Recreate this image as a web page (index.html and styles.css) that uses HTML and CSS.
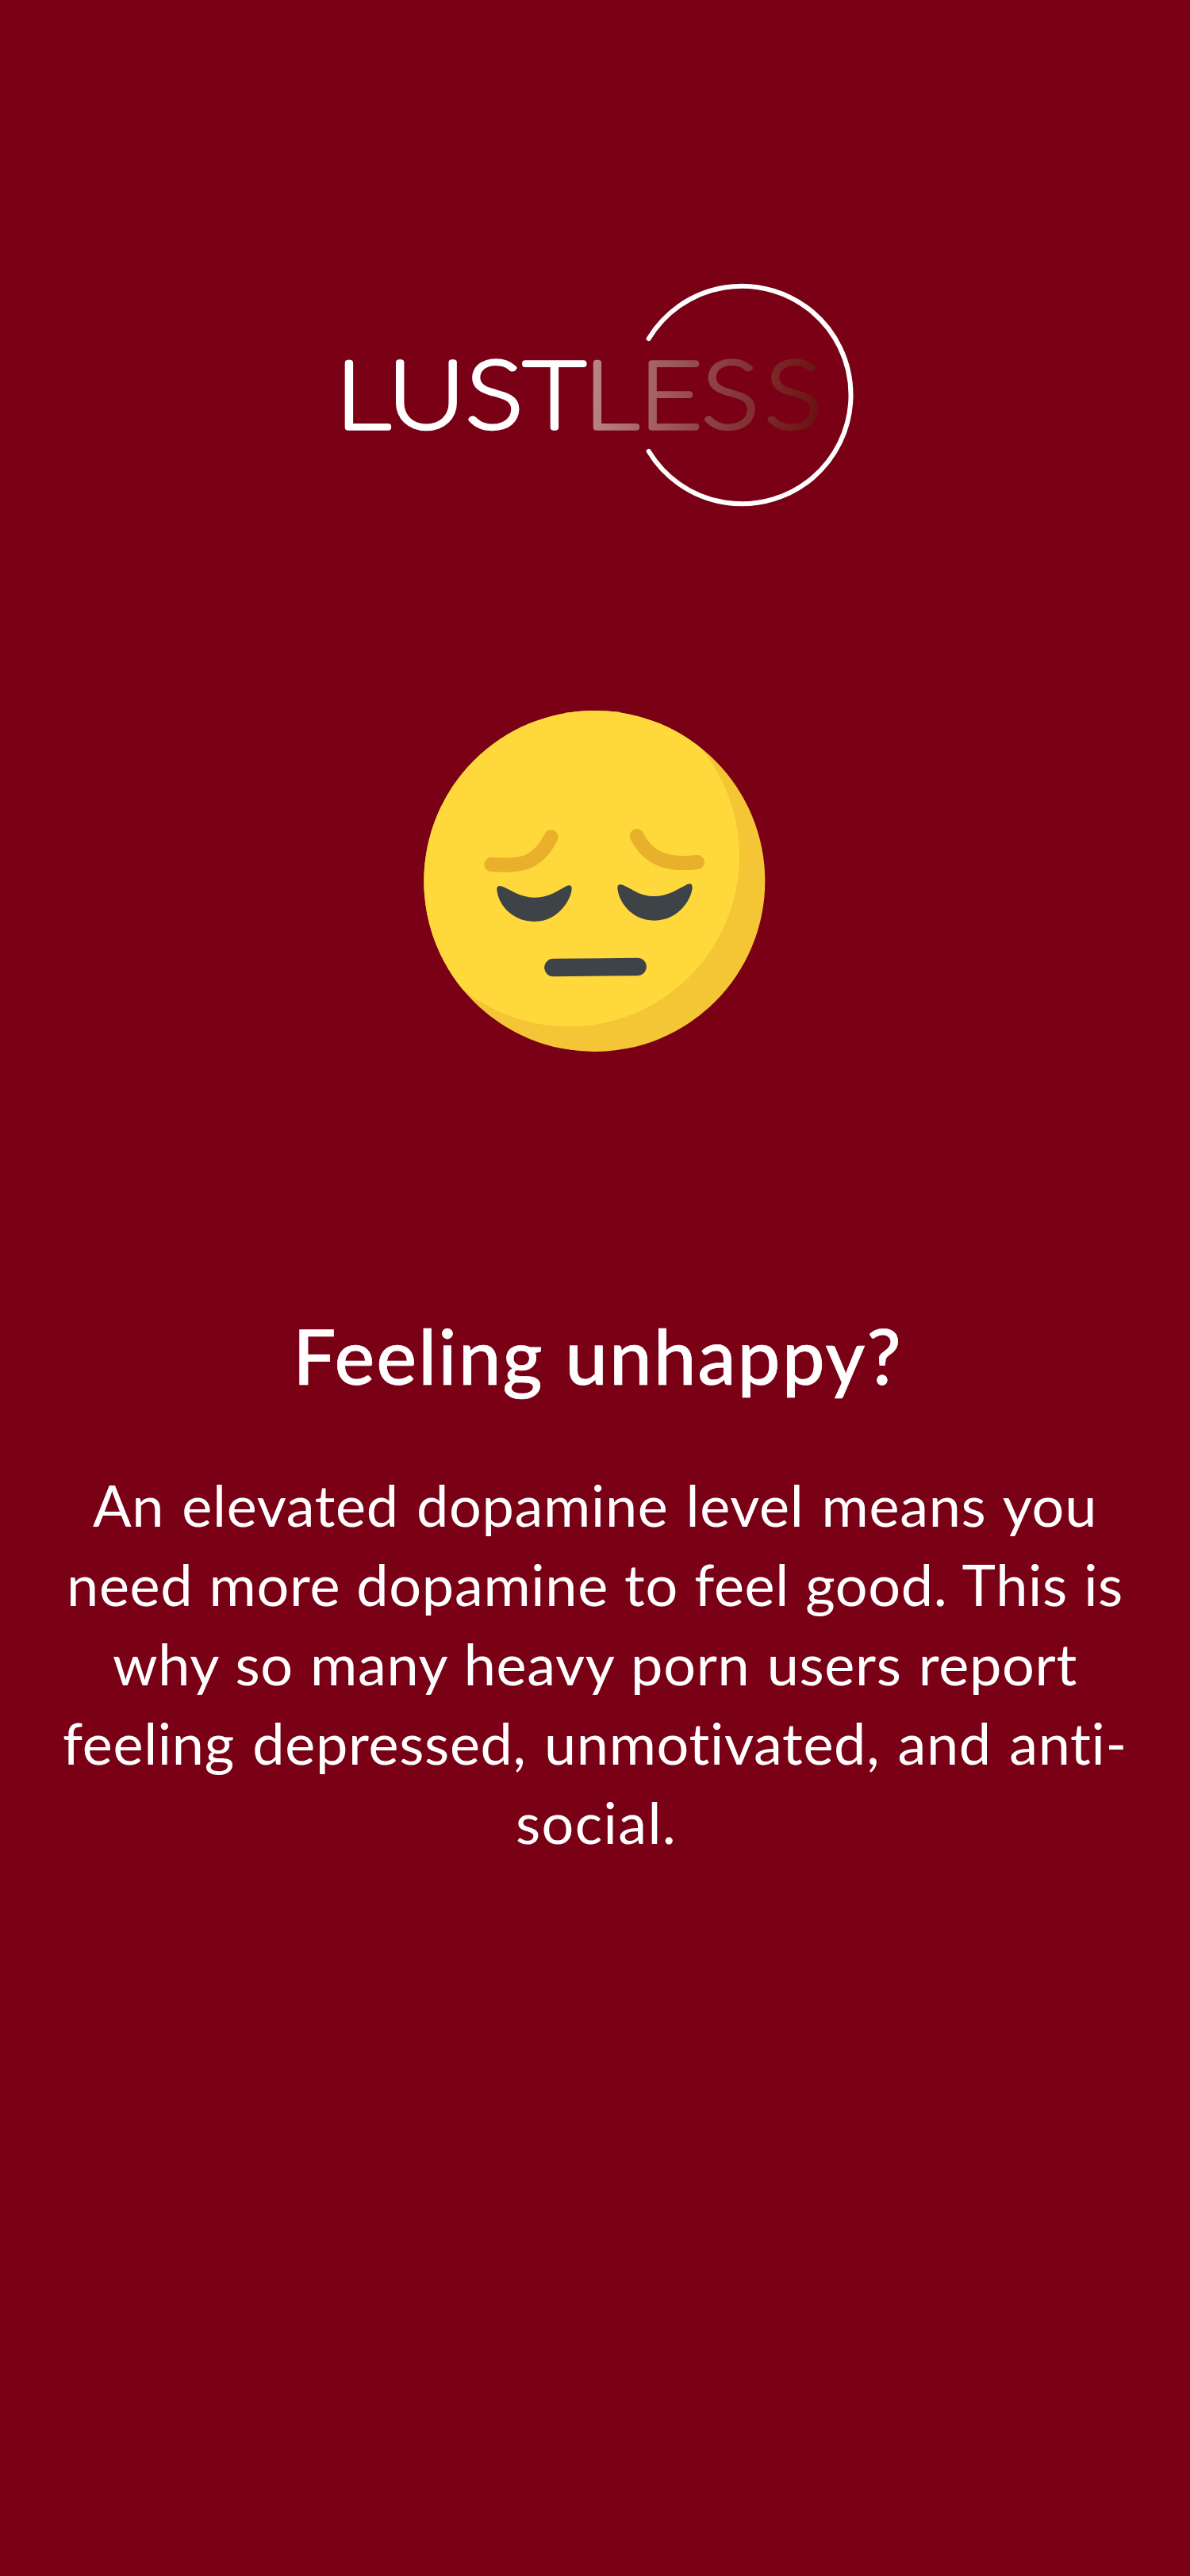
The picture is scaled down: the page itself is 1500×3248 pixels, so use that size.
FILE: index.html
```html
<!DOCTYPE html>
<html lang="en">
<head>
<meta charset="utf-8">
<title>Lustless</title>
<link rel="stylesheet" href="styles.css">
</head>
<body>
<main class="screen">
  <svg class="logo" viewBox="420 350 660 300" role="img" aria-label="Lustless">
    <defs>
      <linearGradient id="fade" gradientUnits="userSpaceOnUse" x1="645" y1="498" x2="890" y2="520">
        <stop offset="0" stop-color="#b88385"/>
        <stop offset=".5" stop-color="#904347"/>
        <stop offset="1" stop-color="#6b1210"/>
      </linearGradient>
    </defs>
    <path class="ring" d="M817.7 427A137.3 137.3 0 1 1 817.7 569"/>
    <g transform="scale(1.16 1)">
      <text class="word word-solid" y="539" x="365 421.5 506.5 569.5">LUST</text>
      <text class="word word-fade" y="539" x="635 695 763 831.5">LESS</text>
    </g>
  </svg>
  <svg class="face" viewBox="0 0 1380 1380" aria-hidden="true">
    <clipPath id="head"><circle cx="688" cy="693" r="645"/></clipPath>
    <circle cx="688" cy="693" r="645" fill="#f4c534"/>
    <circle cx="591" cy="598" r="645" fill="#ffd93b" clip-path="url(#head)"/>
    <path class="brow" d="M298 630C410 640 475 626 524 526M848 522C898 622 984 632 1077 621"/>
    <path class="eye" d="M319 724C319 709 329 709 342 714C390 737 414 755 464 755C516 755 542 732 583 711C596 706 603 709 602 724C600 760 553 846 462 846C365 846 320 767 319 724Z"/>
    <path class="eye" d="M775 718C775 704 785 704 798 709C846 732 862 750 912 750C966 750 998 726 1039 705C1052 700 1058 704 1058 718C1056 758 1009 842 915 842C821 842 776 761 775 718Z"/>
    <path class="mouth" d="M532 1020L851 1017"/>
  </svg>
  <h1 class="title">Feeling unhappy?</h1>
  <p class="copy">
    <span class="line line-1">An elevated dopamine level means you</span>
    <span class="line line-2">need more dopamine to feel good. This is</span>
    <span class="line line-3">why so many heavy porn users report</span>
    <span class="line line-4">feeling depressed, unmotivated, and anti-</span>
    <span class="line line-5">social.</span>
  </p>
</main>
</body>
</html>
```
FILE: styles.css
```css
body {
  margin: 0;
  background: #790015;
  color: #fff;
  font-family: Lato, "Open Sans", sans-serif;
}
.screen {
  box-sizing: border-box;
  min-height: 3248px;
  padding-top: 350px;
  display: flex;
  flex-direction: column;
  align-items: center;
}
.logo { width: 660px; height: 300px; flex: none; }
.ring { fill: none; stroke: #fff; stroke-width: 6; stroke-linecap: round; }
.word {
  font-family: Lato, sans-serif;
  font-size: 116px;
  font-weight: 100;
  stroke-width: 7.5;
  stroke-linejoin: round;
}
.word-solid { fill: #fff; stroke: #fff; }
.word-fade { fill: url(#fade); stroke: url(#fade); }
.face { width: 460px; height: 460px; margin-top: 230px; flex: none; }
.brow { fill: none; stroke: #e9b02c; stroke-width: 54; stroke-linecap: round; }
.eye { fill: #3e4347; }
.mouth { stroke: #3e4347; stroke-width: 67; stroke-linecap: round; }
.title {
  margin: 309px 0 0;
  padding-left: 7px;
  font-size: 96px;
  font-weight: 500;
  line-height: 120px;
  letter-spacing: 2.1px;
  white-space: nowrap;
  -webkit-text-stroke: 0.7px #fff;
}
.copy {
  margin: 78px 0 0;
  font-size: 72px;
  line-height: 100px;
  letter-spacing: 0.7px;
}
.line {
  display: block;
  margin: 0 auto;
  white-space: nowrap;
  text-align: justify;
  text-align-last: justify;
}
.line-1 { width: 1266px; }
.line-2 { width: 1332px; }
.line-3 { width: 1216px; }
.line-4 { width: 1342px; }
.line-5 { width: 200px; letter-spacing: 1.4px; }
```
